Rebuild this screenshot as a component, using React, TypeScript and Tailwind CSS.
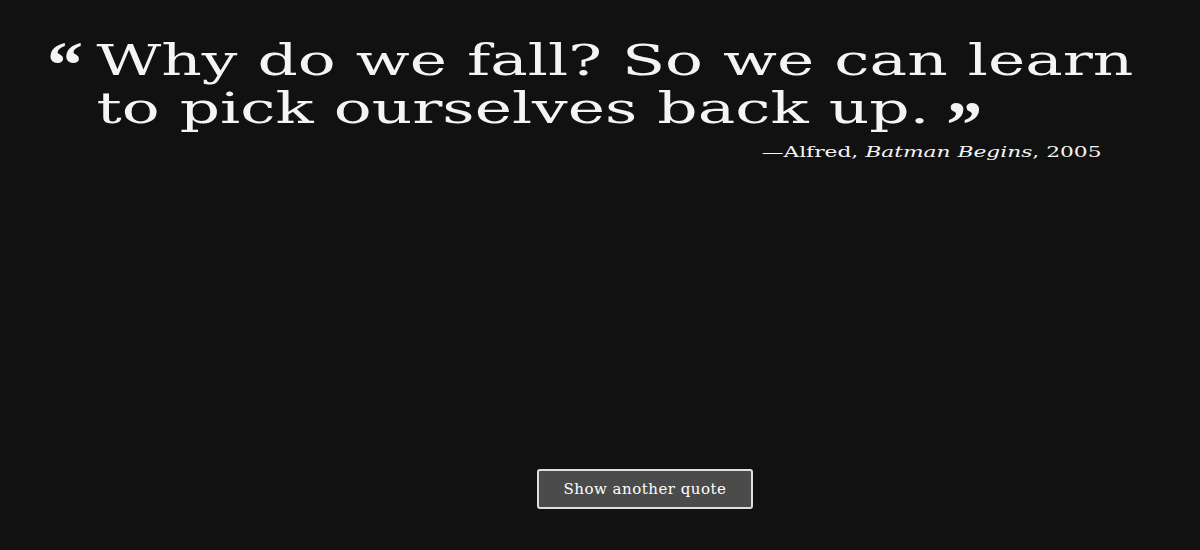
export default function App() {
  return (
    <div
      className="flex h-[550px] w-full flex-col bg-[#111111] text-[#f4f4f4]"
      style={{ fontFamily: '"DejaVu Serif", "Liberation Serif", serif' }}
    >
      {/* screenshot is wide-set, so the quote block is stretched sideways */}
      <figure className="ml-[47px] mt-[37px] w-[703px] origin-left scale-x-[1.5]">
        <div className="flex">
          <span
            className="inline-block h-[30px] w-[33px] shrink-0 origin-top scale-y-[1.35] pt-[6px] text-[48px] font-bold leading-[30px]"
            style={{ fontFamily: '"Liberation Serif", serif' }}
          >
            “
          </span>
          <blockquote className="whitespace-nowrap text-[42px] leading-[48px]">
            Why do we fall? So we can learn
            <br />
            to pick ourselves back up.
            <span
              className="ml-[11px] inline-block origin-top scale-y-[1.35] pt-[24px] align-top text-[48px] font-bold leading-[10px]"
              style={{ fontFamily: '"Liberation Serif", serif' }}
            >
              ”
            </span>
          </blockquote>
        </div>
        <figcaption className="mt-[9px] text-right text-[14.5px] leading-[20px]">
          —Alfred, <em>Batman Begins</em>, 2005
        </figcaption>
      </figure>

      <div className="mb-[41px] ml-[537px] mt-auto">
        <button className="h-[40px] w-[216px] rounded-[3px] border-2 border-[#dedede] bg-[#4b4b4b] text-[15px] tracking-[0.5px] text-white">
          Show another quote
        </button>
      </div>
    </div>
  )
}
